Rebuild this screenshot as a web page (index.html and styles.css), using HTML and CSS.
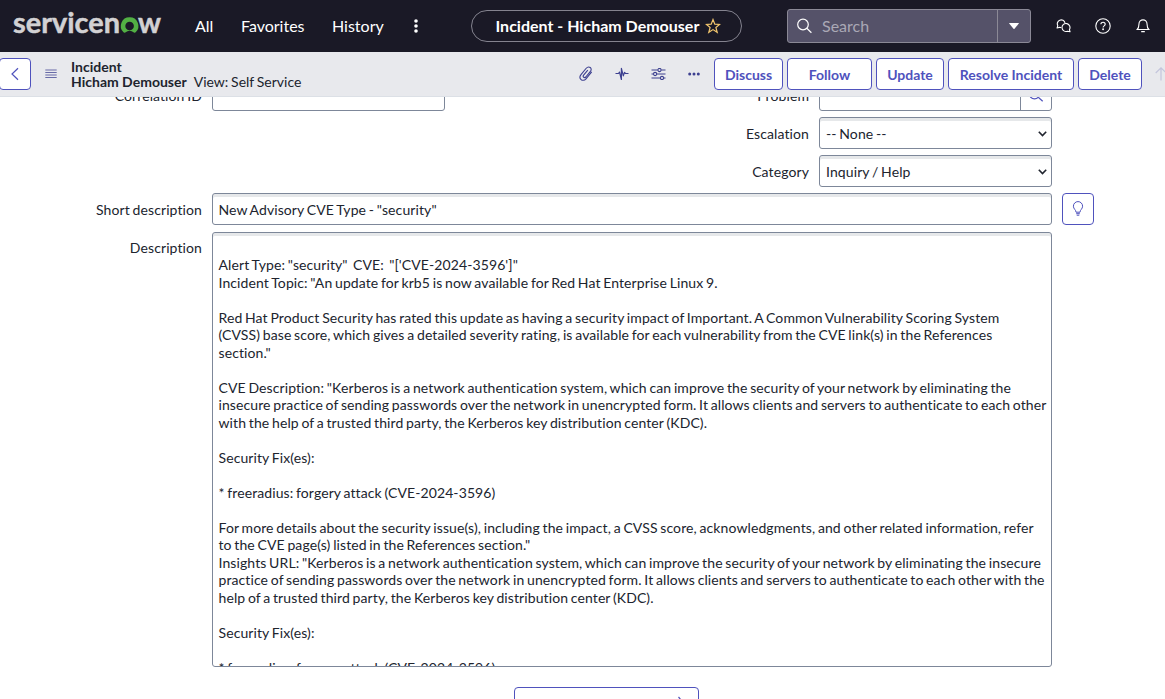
FILE: index.html
```html
<!DOCTYPE html>
<html lang="en">
<head>
<meta charset="utf-8">
<title>Incident - Hicham Demouser</title>
<link rel="stylesheet" href="styles.css">
</head>
<body>
<header class="topbar">
  <svg class="logo" width="150" height="34" viewBox="0 0 150 34" role="img" aria-label="servicenow">
    <text class="logo-text" x="0" y="24.5" textLength="107" lengthAdjust="spacingAndGlyphs">servicen</text>
    <path class="logo-o" d="M116.6 9.3a8.7 8.7 0 0 0-6.1 15 1.4 1.4 0 0 0 1.8.1 7.3 7.3 0 0 1 8.6 0 1.4 1.4 0 0 0 1.8-.1 8.7 8.7 0 0 0-6.1-15zm0 13a4.3 4.3 0 1 1 0-8.6 4.3 4.3 0 0 1 0 8.6z"/>
    <text class="logo-text" x="125" y="24.5" textLength="23" lengthAdjust="spacingAndGlyphs">w</text>
  </svg>
  <nav class="menu">
    <span class="menu-all">All</span><span class="menu-fav">Favorites</span><span class="menu-hist">History</span>
    <svg width="6" height="14" viewBox="0 0 6 14" fill="#fff"><circle cx="3" cy="2" r="1.8"/><circle cx="3" cy="7" r="1.8"/><circle cx="3" cy="12" r="1.8"/></svg>
  </nav>
  <div class="pill">
    <span>Incident - Hicham Demouser</span>
    <svg width="16" height="16" viewBox="0 0 16 16" fill="none" stroke="#f3c66d" stroke-width="1.2"><path d="M8 1.5l1.8 4.6 4.8.3-3.7 3.1 1.3 4.8L8 11.6l-4.2 2.7 1.3-4.8-3.7-3.1 4.8-.3z"/></svg>
  </div>
  <div class="search">
    <svg width="16" height="16" viewBox="0 0 16 16" fill="none" stroke="#fff" stroke-width="1.2"><circle cx="6" cy="6.5" r="5.3"/><path d="M9.8 10.3l4.6 4.4"/></svg>
    <span class="search-text">Search</span>
    <span class="search-drop"><svg width="10" height="6" viewBox="0 0 10 6"><path d="M.4 0h9.2q.5 0 .2.5L5.5 5.7q-.5.5-1 0L.2.5Q-.1 0 .4 0z" fill="#fff"/></svg></span>
  </div>
  <div class="top-icons">
    <svg width="15" height="14" viewBox="0 0 15 14" fill="none" stroke="#fff" stroke-width="1.1" stroke-linejoin="round"><path d="M5.2 8.6c-.6 0-1-.1-1.4-.3l-2.7.7.7-2.3A3.9 3.9 0 1 1 9 3.9"/><path d="M13.4 10.6l.7 2.2-2.6-.6A4 4 0 1 1 13.4 10.6z"/></svg>
    <svg width="16" height="16" viewBox="0 0 16 16" fill="none" stroke="#fff" stroke-width="1.1"><circle cx="8" cy="8" r="7.2"/><path d="M5.9 6.3c0-2.8 4.3-2.6 4.3 0 0 1.6-2.1 1.5-2.1 3.2"/><circle cx="8.1" cy="11.3" r=".4" fill="#fff"/></svg>
    <svg width="14" height="14" viewBox="0 0 14 14" fill="none" stroke="#fff" stroke-width="1.1"><path d="M1.2 10.5h11.6c-1.2-1.2-1.7-2.5-1.7-5.1 0-6.1-8.2-6.1-8.2 0 0 2.6-.5 3.9-1.7 5.1zM5.2 12.6h3.6"/></svg>
  </div>
</header>
<div class="toolbar">
  <span class="btn back"><svg width="10" height="14" viewBox="0 0 10 14" fill="none" stroke="#4f52bd" stroke-width="1.2"><path d="M8 1.2L2 7l6 5.8"/></svg></span>
  <svg class="burger" width="12" height="10" viewBox="0 0 12 10" stroke="#686ba8" stroke-width="1.1"><path d="M.3 1h11.4M.3 3.5h11.4M.3 6h11.4M.3 8.5h11.4"/></svg>
  <div class="title"><b class="t1">Incident</b><div><b class="t2">Hicham Demouser</b><span class="t3">View: Self Service</span></div></div>
  <div class="tools">
    <svg width="14" height="16" viewBox="0 0 14 16" fill="none" stroke="#3d4090" stroke-width="1.1"><path d="M8.8 4.1L4.6 9.2c-1.3 1.7.8 3.3 2.2 1.8l4.4-5.3c2.9-3.5-1.4-6.5-4.2-3.2L2 8.6c-3 3.7 1.6 8.1 5 4.2l5.7-6.9"/></svg>
    <svg width="14" height="14" viewBox="0 0 14 14" fill="none" stroke="#3d4090" stroke-width="1.2" stroke-linejoin="round"><path d="M.5 6.5h3l1-1.4 1.9 7.4V1.4l1.9 7.4 1.2-3.4 1 1.1h3"/></svg>
    <svg width="15" height="12" viewBox="0 0 15 12" fill="none" stroke="#3d4090" stroke-width="1.1"><path d="M.5 2h6.2M10.3 2h4.2M.5 6h1.8M5.9 6h8.6M.5 10h8.7M12.8 10h1.7"/><circle cx="8.5" cy="2" r="1.6"/><circle cx="4.1" cy="6" r="1.6"/><circle cx="11" cy="10" r="1.6"/></svg>
    <svg width="12" height="4" viewBox="0 0 12 4" fill="#3d4090"><circle cx="1.7" cy="2" r="1.5"/><circle cx="6" cy="2" r="1.5"/><circle cx="10.3" cy="2" r="1.5"/></svg>
  </div>
  <div class="actions">
    <span class="btn discuss">Discuss</span><span class="btn follow">Follow</span><span class="btn update">Update</span><span class="btn resolve">Resolve Incident</span><span class="btn delete">Delete</span>
  </div>
  <svg class="up" width="12" height="14" viewBox="0 0 12 14" fill="none" stroke="#c3c5dc" stroke-width="1.2"><path d="M6 13.5V1M.7 6L6 .9 11.3 6"/></svg>
</div>
<main class="viewport">
  <div class="form">
    <label class="lab">Correlation ID</label>
    <div class="field"></div>
    <label class="lab right">Problem</label>
    <div class="field ref"><span class="lookup"><svg width="16" height="16" viewBox="0 0 16 16" fill="none" stroke="#4f52bd" stroke-width="1.2"><circle cx="6.5" cy="6.5" r="5.3"/><path d="M10.3 10.3l4.4 4"/></svg></span></div>
    <label class="lab right">Escalation</label>
    <div class="field select"><span>-- None --</span><svg width="9" height="6" viewBox="0 0 9 6" fill="none" stroke="#20242e" stroke-width="1.6"><path d="M.8.8l3.7 3.8L8.2.8"/></svg></div>
    <label class="lab right">Category</label>
    <div class="field select"><span>Inquiry / Help</span><svg width="9" height="6" viewBox="0 0 9 6" fill="none" stroke="#20242e" stroke-width="1.6"><path d="M.8.8l3.7 3.8L8.2.8"/></svg></div>
    <label class="lab">Short description</label>
    <input class="field wide" value="New Advisory CVE Type - &quot;security&quot;">
    <span class="btn bulb"><svg width="12" height="16" viewBox="0 0 12 16" fill="none" stroke="#4f52bd" stroke-width="1"><path d="M4 11.2c0-2.4-2.6-3.2-2.6-6a4.6 4.6 0 0 1 9.2 0c0 2.8-2.6 3.6-2.6 6zM4.2 12.7h3.6M4.7 14.2h2.6"/></svg></span>
    <label class="lab">Description</label>
    <div class="field wide desc">
Alert Type: "security"  CVE:  "['CVE-2024-3596']"
Incident Topic: "An update for krb5 is now available for Red Hat Enterprise Linux 9.

Red Hat Product Security has rated this update as having a security impact of Important. A Common Vulnerability Scoring System
(CVSS) base score, which gives a detailed severity rating, is available for each vulnerability from the CVE link(s) in the References
section."

CVE Description: "Kerberos is a network authentication system, which can improve the security of your network by eliminating the
insecure practice of sending passwords over the network in unencrypted form. It allows clients and servers to authenticate to each other
with the help of a trusted third party, the Kerberos key distribution center (KDC).

Security Fix(es):

* freeradius: forgery attack (CVE-2024-3596)

For more details about the security issue(s), including the impact, a CVSS score, acknowledgments, and other related information, refer
to the CVE page(s) listed in the References section."
Insights URL: "Kerberos is a network authentication system, which can improve the security of your network by eliminating the insecure
practice of sending passwords over the network in unencrypted form. It allows clients and servers to authenticate to each other with the
help of a trusted third party, the Kerberos key distribution center (KDC).

Security Fix(es):

* freeradius: forgery attack (CVE-2024-3596)</div>
  </div>
  <div class="btn more"><svg width="14" height="14" viewBox="0 0 14 14" fill="none" stroke="#4f52bd" stroke-width="1.2"><path d="M1 7h11.5M7.5 1l5 6-5 6"/></svg></div>
</main>
</body>
</html>
```
FILE: styles.css
```css
* { box-sizing: border-box; }
body {
  margin: 0;
  height: 699px;
  overflow: hidden;
  display: flex;
  flex-direction: column;
  font: 14px/17.5px Lato, sans-serif;
  font-variant-ligatures: none;
  color: #20242e;
  background: #fff;
}
svg { display: block; flex: none; }

.topbar {
  height: 52px;
  flex: none;
  display: flex;
  align-items: center;
  background: #1a1926;
  color: #fff;
  padding-left: 13px;
}
.logo { margin-top: -2px; overflow: visible; }
.logo-text { font: 700 29px Lato, sans-serif; fill: #d2d1d3; stroke: #d2d1d3; stroke-width: .5px; }
.logo-o { fill: #52b044; }
.menu { display: flex; align-items: center; font-size: 16px; line-height: 22px; margin-left: 32px; width: 276px; }
.menu-all { width: 46px; }
.menu-fav { width: 91px; }
.menu-hist { width: 81px; }
.pill {
  width: 271px;
  height: 32px;
  flex: none;
  border: 1px solid #84838f;
  border-radius: 16px;
  display: flex;
  align-items: center;
  padding-left: 23.5px;
  gap: 6px;
  font-size: 16px;
  line-height: 22px;
  font-weight: 700;
  white-space: nowrap;
}
.search {
  width: 244px;
  height: 34px;
  flex: none;
  margin-left: 45px;
  border: 1px solid #8b8996;
  border-radius: 3px;
  background: #555269;
  display: flex;
  align-items: center;
  padding-left: 9px;
}
.search-text { margin-left: 9px; font-size: 16px; line-height: 22px; color: #aaa8b5; flex: 1; }
.search-drop {
  width: 33px;
  height: 32px;
  border-left: 1px solid #8b8996;
  display: flex;
  align-items: center;
  justify-content: center;
}
.top-icons { display: flex; align-items: center; gap: 25px; margin-left: 24.5px; }
.top-icons svg:first-child { margin-right: -1px; }

.toolbar {
  height: 45px;
  flex: none;
  display: flex;
  align-items: center;
  background: #e8e9ed;
  border-bottom: 1px solid #dce0e6;
}
.btn {
  height: 32px;
  flex: none;
  display: flex;
  align-items: center;
  justify-content: center;
  border: 1px solid #4f52bd;
  border-radius: 4px;
  background: #fff;
  color: #4f52bd;
  font-weight: 700;
}
.back { width: 32px; margin-left: -1px; }
.burger { margin-left: 14px; }
.title { margin-left: 14px; width: 508px; flex: none; line-height: 15px; margin-top: -1px; }
.title b { font-weight: 700; }
.title .t1 { display: block; }
.t3 { margin-left: 7px; word-spacing: -.8px; }
.tools { display: flex; flex: none; align-items: center; gap: 22px; width: 135px; }
.actions { display: flex; flex: none; gap: 4px; }
.actions .btn { padding-top: 2px; }
.discuss { width: 69px; }
.follow { width: 85px; }
.update { width: 68px; }
.resolve { width: 126px; }
.delete { width: 64px; }
.up { margin-left: 13px; }

.viewport { flex: 1; overflow: hidden; }
.form {
  margin-top: -18px;
  display: grid;
  grid-template-columns: 202px 233px 354px 233px 32px;
  column-gap: 10px;
  row-gap: 6px;
  letter-spacing: .1px;
  word-spacing: -1px;
}
.lab { grid-column: 1; text-align: right; line-height: 20px; padding-top: 7px; }
.lab.right { grid-column: 3; }
.field {
  height: 32px;
  border: 1px solid #7d8799;
  border-radius: 3px;
  background: #fff;
  box-shadow: inset 0 3px 0 #e6e8ea;
  font: inherit;
  letter-spacing: inherit;
  word-spacing: inherit;
  color: inherit;
  padding: 0 5.5px;
  margin: 0;
  width: 100%;
  outline: 0;
}
.select { grid-column: 4; display: flex; align-items: center; justify-content: space-between; padding: 0 4px 0 6px; }
.select span { padding-top: 1px; }
.select svg { margin-top: 2px; }
.ref { display: flex; justify-content: flex-end; padding: 0; }
.lookup { width: 31px; border-left: 1px solid #7d8799; display: flex; align-items: center; justify-content: center; }
.wide { grid-column: 2 / 5; }
.bulb { width: 32px; }
.desc {
  height: 435px;
  margin-top: 1px;
  padding-top: 5.9px;
  white-space: pre;
  overflow: hidden;
}
.more { width: 185px; margin: 20px 0 0 514px; justify-content: flex-end; padding-right: 13px; }
```
